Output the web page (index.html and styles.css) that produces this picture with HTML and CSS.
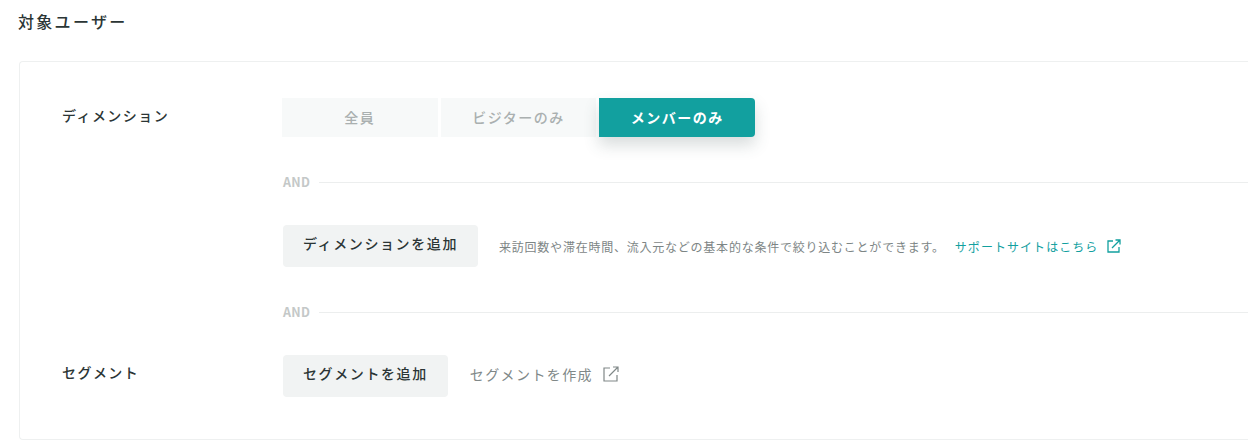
FILE: index.html
```html
<!DOCTYPE html>
<html lang="ja">
<head>
    <meta charset="UTF-8">
    <meta name="viewport" content="width=device-width, initial-scale=1.0">
    <title>対象ユーザー</title>
    <link rel="stylesheet" href="styles.css">
</head>
<body>
    <h2 class="title">対象ユーザー</h2>

    <div class="card">
        <div class="row">
            <div class="label">ディメンション</div>
            <div class="body">
                <div class="toggle">
                    <div class="seg">全員</div>
                    <div class="seg">ビジターのみ</div>
                    <div class="seg active">メンバーのみ</div>
                </div>

                <div class="and"><span>AND</span><i></i></div>

                <div class="line">
                    <div class="btn">ディメンションを追加</div>
                    <p class="hint">来訪回数や滞在時間、流入元などの基本的な条件で絞り込むことができます。</p>
                    <a class="support">サポートサイトはこちら
                        <svg width="14" height="14" viewBox="0 0 14 14" fill="none" stroke="currentColor" stroke-width="1.3">
                            <path d="M6 2H1v11h11V8"/>
                            <path d="M5 9l8-8M8.5 1H13v4.5"/>
                        </svg>
                    </a>
                </div>

                <div class="and"><span>AND</span><i></i></div>
            </div>
        </div>

        <div class="row">
            <div class="label">セグメント</div>
            <div class="body line">
                <div class="btn">セグメントを追加</div>
                <a class="create">セグメントを作成
                    <svg width="16" height="16" viewBox="0 0 16 16" fill="none" stroke="currentColor" stroke-width="1.2">
                        <path d="M7 2H1v13h13V9"/>
                        <path d="M6 10l9-9M10 1h5v5"/>
                    </svg>
                </a>
            </div>
        </div>
    </div>
</body>
</html>
```

FILE: styles.css
```css
html, body {
    height: 440px;
    overflow: hidden;
}
body {
    margin: 0;
    background: #fff;
    color: #2b3535;
    font-family: "Noto Sans CJK JP", "Noto Sans", sans-serif;
}
.title {
    margin: 0;
    padding: 9px 0 0 18px;
    height: 61px;
    box-sizing: border-box;
    font-size: 16px;
    line-height: 24px;
    font-weight: 500;
    letter-spacing: 2.3px;
}
.card {
    height: 379px;
    margin-left: 19px;
    padding: 36px 0 0 42px;
    box-sizing: border-box;
    border: 1px solid #eef0f0;
    border-right: 0;
    border-radius: 4px 0 0 4px;
}
.row {
    display: flex;
}
.label {
    flex: 0 0 220px;
    font-size: 14px;
    line-height: 34px;
    font-weight: 500;
    letter-spacing: 1.45px;
}
.body {
    flex: 1;
}
.toggle {
    display: flex;
    gap: 3px;
    width: 473px;
    height: 39px;
}
.seg {
    flex: 1;
    display: flex;
    align-items: center;
    justify-content: center;
    padding-bottom: 2px;
    box-sizing: border-box;
    background: #f7f9f9;
    color: #aab0b0;
    font-size: 14px;
    font-weight: 500;
    letter-spacing: 1.5px;
}
.active {
    background: #12a09f;
    color: #fff;
    font-weight: 700;
    border-radius: 0 4px 4px 0;
    box-shadow: 0 8px 16px rgba(60, 80, 80, 0.2);
}
.and {
    display: flex;
    align-items: center;
    gap: 9px;
    margin: 36px 0 34px;
    height: 18px;
    font-size: 12.5px;
    font-weight: 700;
    letter-spacing: 0.3px;
    color: #c4c8c8;
}
.and span {
    margin-left: 1px;
    padding-bottom: 2px;
}
.and i {
    flex: 1;
    height: 1px;
    background: #eceeee;
}
.line {
    display: flex;
    align-items: center;
}
.btn {
    margin-left: 1px;
    padding: 0 20px 6px;
    height: 42px;
    display: flex;
    align-items: center;
    box-sizing: border-box;
    background: #f1f3f3;
    border-radius: 4px;
    font-size: 14px;
    font-weight: 500;
    letter-spacing: 1.6px;
}
.hint {
    margin: 0 0 0 21px;
    font-size: 12px;
    letter-spacing: 0.77px;
    color: #7d8585;
}
.support {
    display: flex;
    align-items: center;
    gap: 9px;
    margin-left: 10px;
    font-size: 12px;
    letter-spacing: 1.05px;
    color: #12a09f;
}
.create {
    display: flex;
    align-items: center;
    gap: 10px;
    margin-left: 22px;
    padding-bottom: 4px;
    font-size: 14px;
    letter-spacing: 1.4px;
    color: #808888;
}
```
